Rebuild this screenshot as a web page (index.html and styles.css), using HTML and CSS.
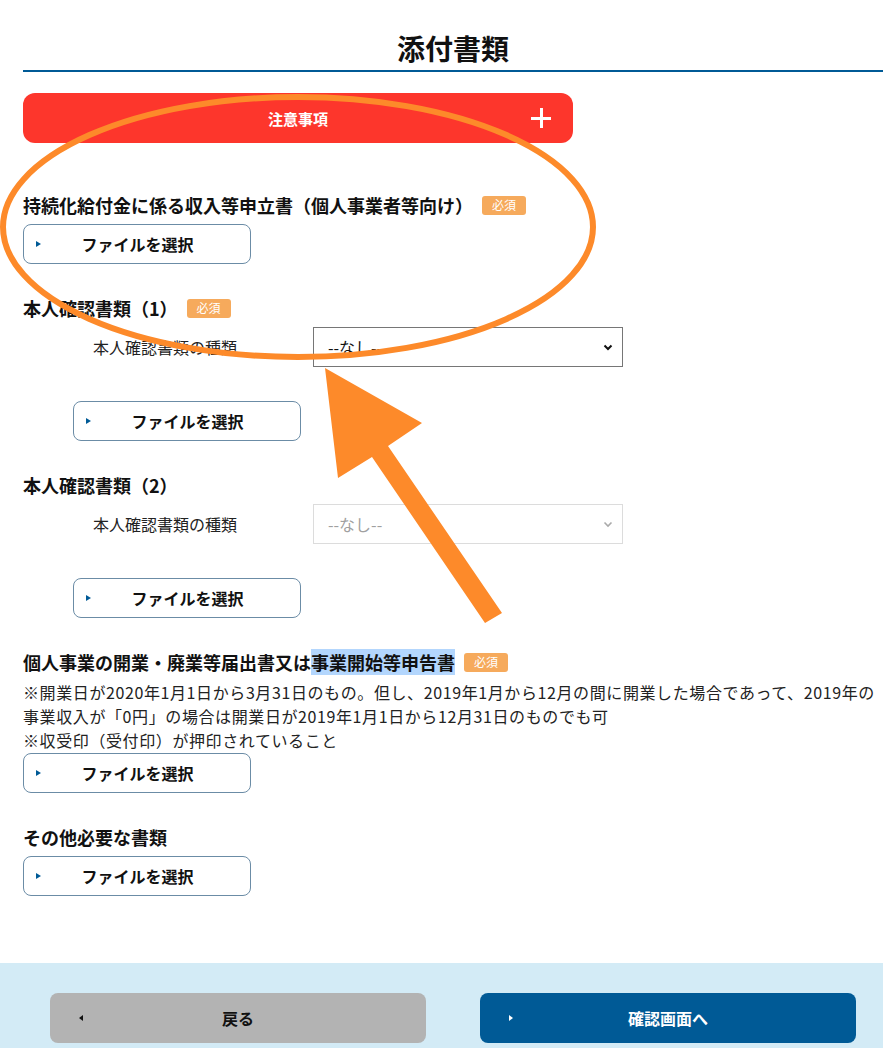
FILE: index.html
```html
<!DOCTYPE html>
<html lang="ja">
<head>
<meta charset="utf-8">
<title>添付書類</title>
<link rel="stylesheet" href="styles.css">
</head>
<body>
<div class="page">
  <h1 class="title">添付書類</h1>
  <div class="notice">
    <span class="notice-text">注意事項</span>
    <span class="plus"></span>
  </div>

  <section class="sec sec-first">
    <h2 class="sec-head"><span>持続化給付金に係る収入等申立書（個人事業者等向け）</span><span class="badge">必須</span></h2>
    <div class="file-btn"><span class="tri"></span><span class="btn-label">ファイルを選択</span></div>
  </section>

  <section class="sec">
    <h2 class="sec-head"><span>本人確認書類（1）</span><span class="badge">必須</span></h2>
    <div class="id-block">
      <div class="row">
        <span class="row-label">本人確認書類の種類</span>
        <div class="select"><span class="select-text">--なし--</span><svg class="chev" width="10" height="7" viewBox="0 0 10 7"><path d="M1.5 1.5 L5 5 L8.5 1.5" fill="none" stroke="#111" stroke-width="2"/></svg></div>
      </div>
      <div class="file-btn file-btn-gap"><span class="tri"></span><span class="btn-label">ファイルを選択</span></div>
    </div>
  </section>

  <section class="sec">
    <h2 class="sec-head"><span>本人確認書類（2）</span></h2>
    <div class="id-block">
      <div class="row">
        <span class="row-label">本人確認書類の種類</span>
        <div class="select select-disabled"><span class="select-text">--なし--</span><svg class="chev" width="10" height="7" viewBox="0 0 10 7"><path d="M1.5 1.5 L5 5 L8.5 1.5" fill="none" stroke="#aaa" stroke-width="1.6"/></svg></div>
      </div>
      <div class="file-btn file-btn-gap"><span class="tri"></span><span class="btn-label">ファイルを選択</span></div>
    </div>
  </section>

  <section class="sec">
    <h2 class="sec-head sec-head-tight"><span>個人事業の開業・廃業等届出書又は<span class="hl">事業開始等申告書</span></span><span class="badge">必須</span></h2>
    <p class="note">※開業日が2020年1月1日から3月31日のもの。但し、2019年1月から12月の間に開業した場合であって、2019年の事業収入が「0円」の場合は開業日が2019年1月1日から12月31日のものでも可<br>※収受印（受付印）が押印されていること</p>
    <div class="file-btn"><span class="tri"></span><span class="btn-label">ファイルを選択</span></div>
  </section>

  <section class="sec">
    <h2 class="sec-head"><span>その他必要な書類</span></h2>
    <div class="file-btn"><span class="tri"></span><span class="btn-label">ファイルを選択</span></div>
  </section>
</div>

<footer class="footer">
  <div class="nav-btn nav-back"><span class="tri-left"></span><span class="btn-label">戻る</span></div>
  <div class="nav-btn nav-next"><span class="tri-right"></span><span class="btn-label">確認画面へ</span></div>
</footer>

<svg class="annot" width="883" height="1048" viewBox="0 0 883 1048">
  <ellipse cx="298" cy="227" rx="295" ry="130" fill="none" stroke="#fd8a2a" stroke-width="6"/>
  <polygon points="325,368 338,478 372,457 485,623 502,613 388,446 422,423" fill="#fd8a2a"/>
</svg>
</body>
</html>
```

FILE: styles.css
```css
* { box-sizing: border-box; }

html, body {
  margin: 0;
  padding: 0;
  background: #fff;
}

body {
  font-family: "Noto Sans CJK JP", "Noto Sans", sans-serif;
  color: #111;
  position: relative;
}

.page {
  padding-left: 23px;
}

.title {
  margin: 0;
  padding: 28px 0 2px;
  font-size: 28px;
  line-height: 40px;
  font-weight: bold;
  text-align: center;
  border-bottom: 2px solid #005a96;
}

.notice {
  margin-top: 21px;
  width: 550px;
  height: 50px;
  background: #fd362c;
  border-radius: 12px;
  display: flex;
  align-items: center;
  justify-content: center;
  position: relative;
}

.notice-text {
  color: #fff;
  font-size: 15px;
  font-weight: bold;
}

.plus {
  position: absolute;
  right: 22px;
  top: 15px;
  width: 20px;
  height: 20px;
}
.plus::before, .plus::after {
  content: "";
  position: absolute;
  background: #fff;
}
.plus::before { left: 9px; top: 0; width: 3px; height: 20px; }
.plus::after { left: 0; top: 9px; width: 20px; height: 3px; }

.sec { margin-top: 31px; }
.sec-first { margin-top: 49px; }

.sec-head {
  margin: 0 0 6px;
  font-size: 18px;
  line-height: 26px;
  font-weight: bold;
  display: flex;
  align-items: center;
  gap: 9px;
}
.sec-head-tight { margin-bottom: 5px; }

.hl { background: #b3d6fd; }

.badge {
  display: inline-flex;
  align-items: center;
  justify-content: center;
  width: 44px;
  height: 19px;
  background: #f6aa5c;
  color: #fff;
  font-size: 12px;
  font-weight: normal;
  border-radius: 3px;
  line-height: 1;
}

.file-btn {
  width: 228px;
  height: 40px;
  border: 1px solid #6b8ca6;
  border-radius: 8px;
  display: flex;
  align-items: center;
  padding: 0 16px 0 12px;
  background: #fff;
}

.tri {
  width: 0;
  height: 0;
  border-left: 5px solid #005a96;
  border-top: 3.5px solid transparent;
  border-bottom: 3.5px solid transparent;
}

.btn-label {
  flex: 1;
  text-align: center;
  font-size: 16px;
  font-weight: bold;
  color: #111;
}

.id-block { padding-left: 50px; }

.row {
  display: flex;
  align-items: center;
}

.row-label {
  width: 240px;
  padding-left: 20px;
  font-size: 16px;
  color: #222;
}

.select {
  width: 310px;
  height: 40px;
  border: 1px solid #767676;
  display: flex;
  align-items: center;
  padding: 0 9px 0 14px;
  background: #fff;
}
.select-text {
  flex: 1;
  font-size: 16px;
  color: #111;
}
.select-disabled { border-color: #dcdcdc; }
.select-disabled .select-text { color: #a0a0a0; }

.file-btn-gap { margin-top: 34px; }

.note {
  margin: 0 0 1px;
  font-size: 16px;
  line-height: 24px;
  letter-spacing: 0.6px;
  color: #222;
}

.footer {
  margin-top: 67px;
  background: #d3ebf6;
  padding: 30px 27px 30px 50px;
  display: flex;
  gap: 54px;
}

.nav-btn {
  width: 376px;
  height: 50px;
  border-radius: 8px;
  display: flex;
  align-items: center;
  padding: 0 33px 0 29px;
}
.nav-back { background: #b3b3b3; }
.nav-next { background: #005a96; }
.nav-next .btn-label { color: #fff; }

.tri-left {
  width: 0;
  height: 0;
  border-right: 4px solid #111;
  border-top: 3.5px solid transparent;
  border-bottom: 3.5px solid transparent;
}
.tri-right {
  width: 0;
  height: 0;
  border-left: 4px solid #fff;
  border-top: 3.5px solid transparent;
  border-bottom: 3.5px solid transparent;
}

.annot {
  position: absolute;
  left: 0;
  top: 0;
  pointer-events: none;
}
```
